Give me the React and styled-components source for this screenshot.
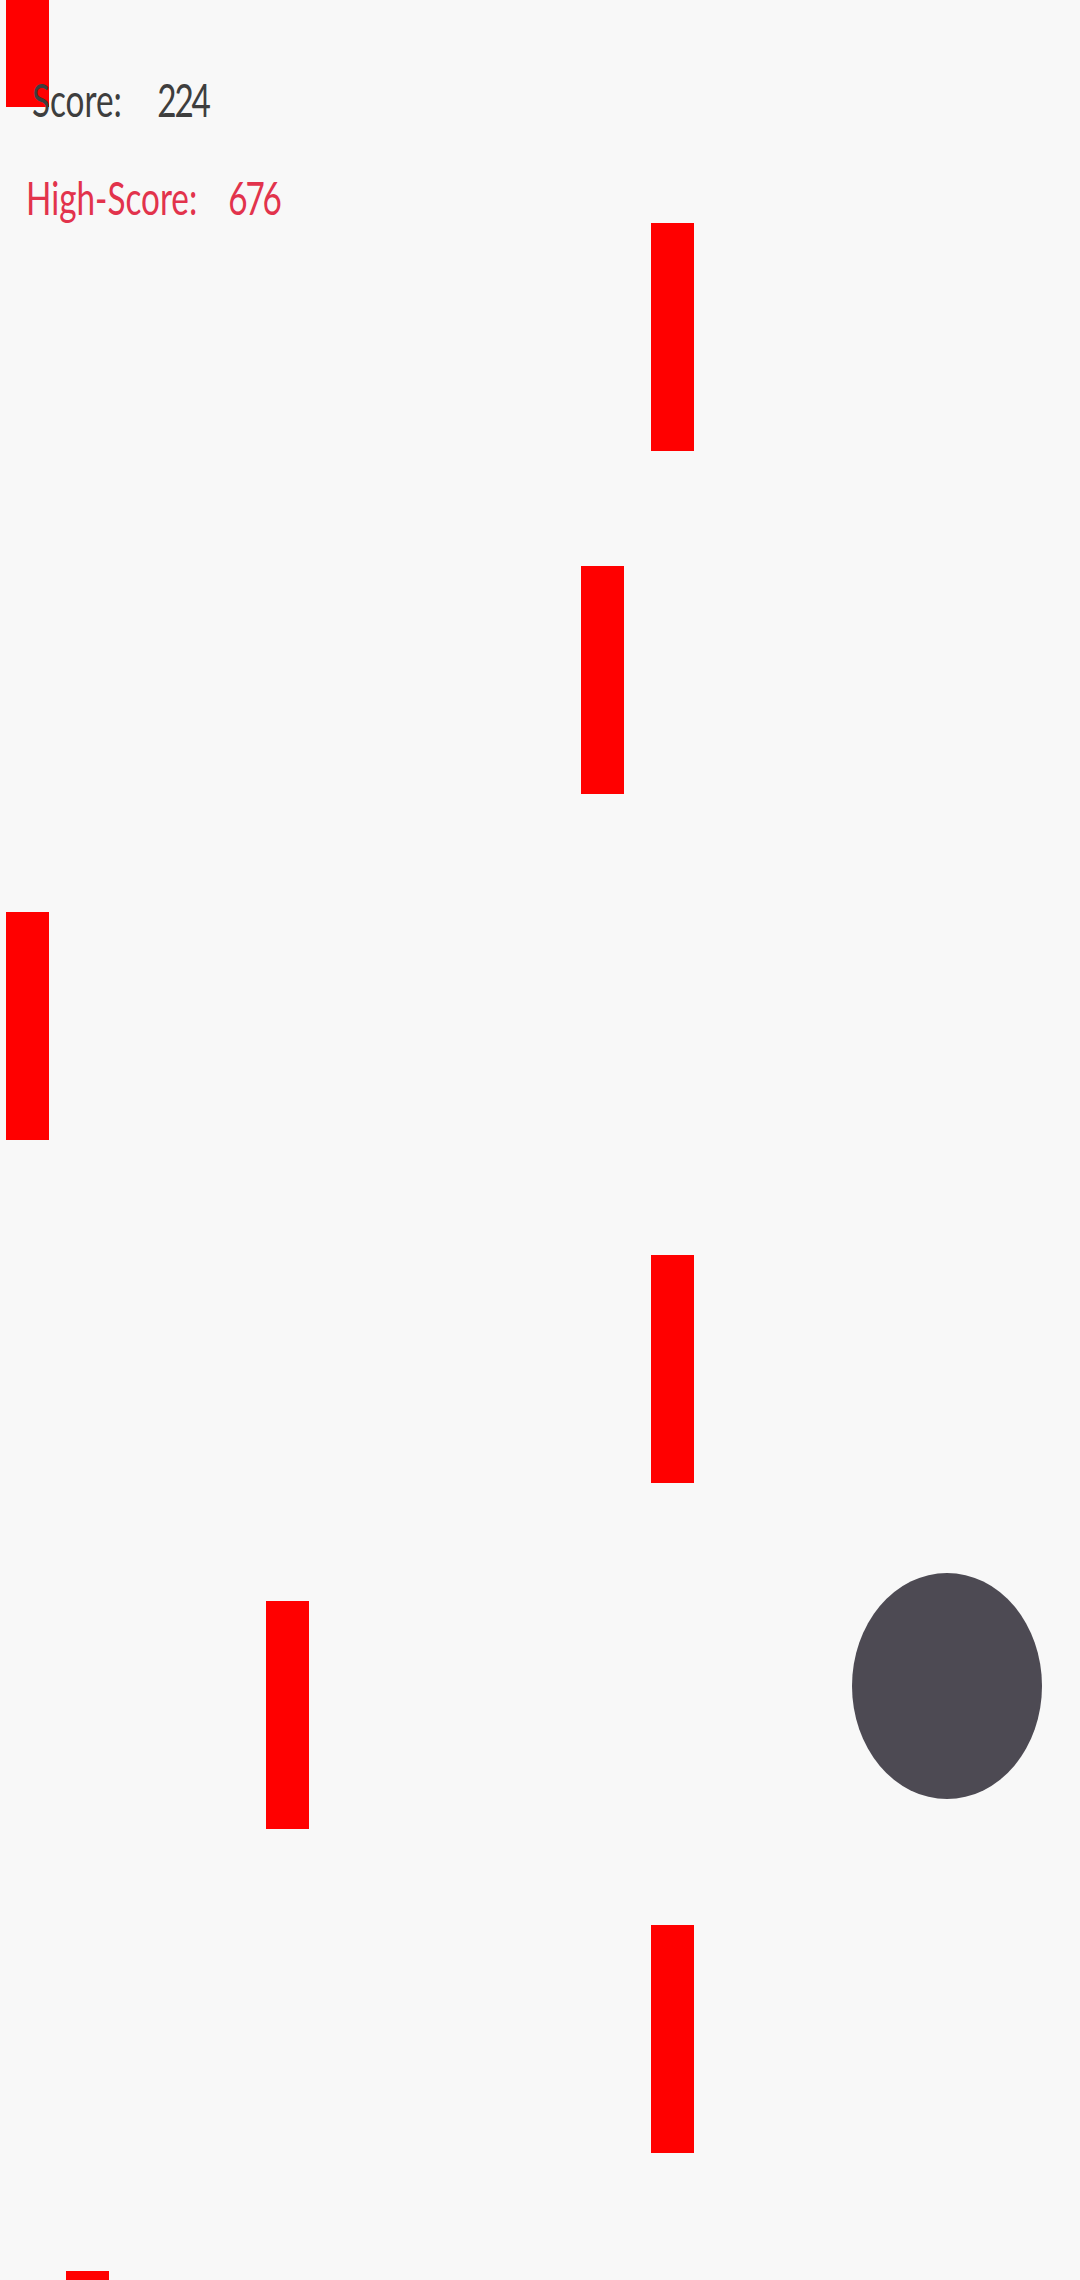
import React from 'react';
import styled, { createGlobalStyle } from 'styled-components';

const GlobalStyle = createGlobalStyle`
    html, body {
        margin: 0;
        padding: 0;
        background: #f8f8f8;
    }
`;

export const Stage = styled.div`
    position: relative;
    width: 1080px;
    height: 2280px;
    overflow: hidden;
    background-color: #f8f8f8;
    font-family: Lato, 'Open Sans', sans-serif;
`;

export const Hud = styled.div`
    position: relative;
    z-index: 2;
    display: flex;
    flex-direction: column;
    gap: 46px;
    padding: 74px 0 0 26px;
`;

export const HudLine = styled.div`
    display: flex;
    align-items: baseline;
    gap: ${(p) => p.gap}px;
    margin-left: ${(p) => p.indent || 0}px;
    font-size: 45px;
    font-weight: 400;
    line-height: 52px;
    color: ${(p) => p.color};
    transform: scale(0.74, 1.02);
    transform-origin: left center;
`;

export const Value = styled.span`
    letter-spacing: -3px;
`;

export const Obstacle = styled.div`
    position: absolute;
    width: 43px;
    height: 228px;
    background-color: #ff0000;
`;

export const Ball = styled.div`
    position: absolute;
    left: 852px;
    top: 1573px;
    width: 190px;
    height: 226px;
    border-radius: 50%;
    background-color: #4d4a53;
`;

const obstacles = [
    { x: 6, y: -121 },
    { x: 651, y: 223 },
    { x: 581, y: 566 },
    { x: 6, y: 912 },
    { x: 651, y: 1255 },
    { x: 266, y: 1601 },
    { x: 651, y: 1925 },
    { x: 66, y: 2271 },
];

const App = () => (
    <>
        <GlobalStyle />
        <Stage>
            {obstacles.map((o, i) => (
                <Obstacle key={i} style={{ left: o.x, top: o.y }} />
            ))}
            <Ball />
            <Hud>
                <HudLine color="#3e3e3e" indent={6} gap={48}>
                    <span>Score:</span>
                    <Value>224</Value>
                </HudLine>
                <HudLine color="#e2334c" gap={42}>
                    <span>High-Score:</span>
                    <Value>676</Value>
                </HudLine>
            </Hud>
        </Stage>
    </>
);

export default App;
